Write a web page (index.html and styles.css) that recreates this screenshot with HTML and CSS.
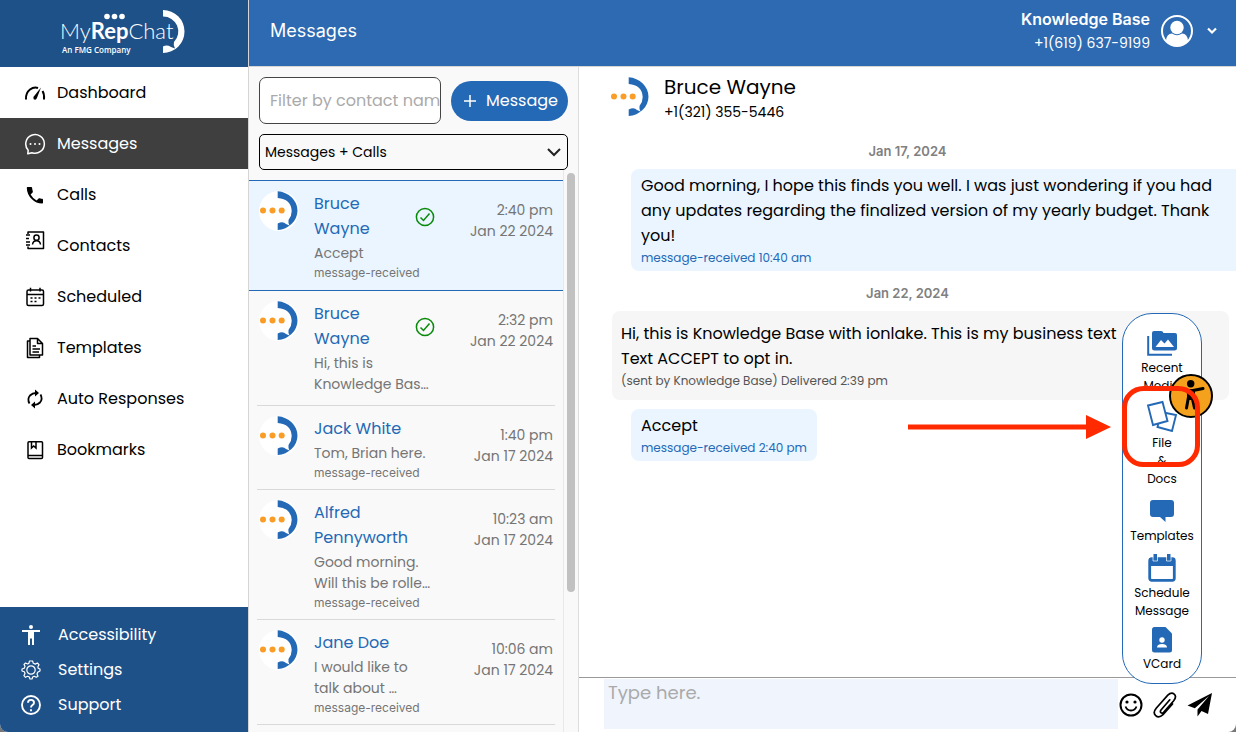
FILE: index.html
```html
<!DOCTYPE html>
<html lang="en">
<head>
    <meta charset="UTF-8">
    <meta name="viewport" content="width=device-width, initial-scale=1.0">
    <title>MyRepChat - Messages</title>
    <link rel="stylesheet" href="styles.css">
</head>
<body>
    <!-- Shared icons -->
    <svg class="sprite" width="0" height="0" aria-hidden="true">
        <symbol id="avatar" viewBox="0 0 40 40">
            <circle cx="20" cy="20" r="20" fill="#fff"/>
            <path d="M18.700 .3A21.300 19.400 0 0 1 18.700 39V32.500Q24 30 27 33L30.500 34.500Q29 32 29.500 29Q32.700 25 32.700 20Q32 8 18.700 7Z" fill="#2469b6"/>
            <circle cx="4" cy="19.500" r="3" fill="#f99d26"/>
            <circle cx="13.500" cy="19.500" r="3" fill="#f99d26"/>
            <circle cx="22.700" cy="19.500" r="3" fill="#f99d26"/>
        </symbol>
        <symbol id="check" viewBox="0 0 20 20">
            <circle cx="10" cy="10" r="8.600" fill="none" stroke="#0a8a0a" stroke-width="1.500"/>
            <path d="M5.500 10.500 8.500 13.500 14.500 6.500" fill="none" stroke="#0a8a0a" stroke-width="1.500"/>
        </symbol>
    </svg>

    <div class="app">
        <aside class="sidebar">
            <a href="#" class="logo" aria-label="MyRepChat">
                <svg width="128" height="48" viewBox="0 0 128 48">
                    <g fill="#fff">
                        <circle cx="47" cy="8.500" r="2.800"/>
                        <circle cx="54.500" cy="8.500" r="2.800"/>
                        <circle cx="62" cy="8.500" r="2.800"/>
                        <text class="logo-name" x="0" y="31"><tspan class="light">My</tspan><tspan class="bold">Rep</tspan><tspan class="light">Chat</tspan></text>
                        <text class="logo-sub" x="2" y="45">An FMG Company</text>
                        <path d="M103 2A21.500 21.500 0 0 1 103 45V38.500Q107 36.500 111 39L115 40.500Q113 37 114 34A15 15 0 0 0 103 8.500Z"/>
                    </g>
                </svg>
            </a>

            <nav class="menu">
                <a href="#">
                    <svg viewBox="0 0 22 22" fill="none" stroke="currentColor" stroke-width="2"><path d="M2 17.500Q1.500 11 6 7.500Q10 4.500 14 6M18.500 9Q20.500 12 20 17.500"/><path d="M17 5.500 12.800 16.200Q11.500 18.500 9.800 17.300Q8.700 16 10 14.300Z" fill="currentColor" stroke="none"/></svg>
                    Dashboard
                </a>
                <a href="#" class="active">
                    <svg viewBox="0 0 22 22" fill="none" stroke="currentColor" stroke-width="1.500"><path d="M4.200 17.200A9.300 9.300 0 1 1 8 19.700L3.800 20.800Z" stroke-linejoin="round"/><g fill="currentColor" stroke="none"><circle cx="6.500" cy="11" r="1"/><circle cx="11" cy="11" r="1"/><circle cx="15.500" cy="11" r="1"/></g></svg>
                    Messages
                </a>
                <a href="#">
                    <svg viewBox="0 0 22 22" fill="currentColor"><path d="M3.500 3H7.200Q8 3 8.100 3.800Q8.200 5.700 8.800 7.300Q9 8 8.600 8.400L6.600 10.400Q9 14.500 12.600 16.400L14.600 14.400Q15 14 15.700 14.200Q17.300 14.800 18.200 14.800Q19 15 19 15.800V18.700Q19 19.500 18.200 19.500Q12 19.500 7.700 15Q3 10.500 2.800 4Q2.800 3 3.500 3Z"/></svg>
                    Calls
                </a>
                <a href="#">
                    <svg class="raised" viewBox="0 0 22 22" fill="none" stroke="currentColor" stroke-width="1.500"><path d="M4 5V3H19.500V19.500H4V17.500M2 6H6M2 9.500H5M2 13H6M2 16H6" stroke-linejoin="round"/><circle cx="12.500" cy="8.700" r="2.600"/><path d="M8.500 15.500Q9 11.800 12.500 11.800T16.500 15.500"/></svg>
                    Contacts
                </a>
                <a href="#">
                    <svg viewBox="0 0 22 22" fill="none" stroke="currentColor" stroke-width="1.500"><rect x="3" y="4" width="16.500" height="15.500" rx="1.500"/><path d="M3 8.500H19.500M6.500 1.800V5.500M16 1.800V5.500"/><path d="M6.500 12H17M6.500 15.500H13" stroke-dasharray="2 2"/></svg>
                    Scheduled
                </a>
                <a href="#">
                    <svg viewBox="0 0 22 22" fill="none" stroke="currentColor" stroke-width="1.500" stroke-linejoin="round"><path d="M6 1.500H13.500L18.500 6.500V18H6ZM13.500 1.500V6.500H18.500M6 4H3.500V20.500H15.500V18"/><path d="M8.500 9H12M8.500 12H16M8.500 15H15"/></svg>
                    Templates
                </a>
                <a href="#">
                    <svg viewBox="0 0 22 22" fill="none" stroke="currentColor" stroke-width="1.800"><path d="M5.500 15.500Q3 11 6 7.500Q8.500 5 12 5M16.500 6.500Q19 11 16 14.500Q13.500 17 10 17"/><path d="M11 1.500 15 5 11 8.500ZM11 13.500 7 17 11 20.500Z" fill="currentColor" stroke="none"/></svg>
                    Auto Responses
                </a>
                <a href="#">
                    <svg viewBox="0 0 22 22" fill="none" stroke="currentColor" stroke-width="1.500"><rect x="4" y="2.700" width="14.500" height="16.800" rx="1"/><path d="M4 16.500H18.500M7.500 3V9L9.700 7L12 9V3"/></svg>
                    Bookmarks
                </a>
            </nav>

            <nav class="side-footer">
                <a href="#">
                    <svg viewBox="0 0 22 22" fill="currentColor"><circle cx="11" cy="3" r="2"/><path d="M2 6H20V8H14V21H12V14.500H10V21H8V8H2Z"/></svg>
                    Accessibility
                </a>
                <a href="#">
                    <svg viewBox="0 0 22 22" fill="none" stroke="currentColor" stroke-width="1.200" stroke-linejoin="round"><circle cx="11" cy="11" r="4.200"/><path d="M9.400 2H12.600L13.300 4.300L15.300 5.100L17.400 4L19 5.600L17.900 7.700L18.200 9.300L20 10V12L17.700 13.200L17 15L18 17.200L16.200 18.300L14.200 17.300L12.700 18L12 20H10L9.300 18L7.700 17.300L5.500 18.300L3.900 16.700L5 14.500L4.300 12.700L2 12V10L4.200 9.200L5 7.300L4 5.400L5.500 4L7.700 5L9 4.200Z"/></svg>
                    Settings
                </a>
                <a href="#">
                    <svg viewBox="0 0 22 22" fill="none" stroke="currentColor" stroke-width="1.900"><circle cx="11" cy="11" r="9"/><path d="M8 8.800Q8 5.900 11 5.900T14 8.700Q14 10 12.500 11.100T11 13.600M11 15.200V17.200"/></svg>
                    Support
                </a>
            </nav>
        </aside>

        <main class="main">
            <header class="topbar">
                <h1>Messages</h1>
                <div class="account">
                    <div class="account-text">
                        <strong>Knowledge Base</strong>
                        <span>+1(619) 637-9199</span>
                    </div>
                    <button type="button" aria-label="Account menu">
                        <svg width="32" height="32" viewBox="0 0 32 32"><circle cx="16" cy="16" r="15" fill="none" stroke="#fff" stroke-width="2"/><circle cx="16" cy="12.500" r="6.700" fill="#fff"/><path d="M5 26Q5.500 18.500 11 18.500Q16 22 21 18.500Q26.500 18.500 27 26Q22 31 16 31T5 26Z" fill="#fff"/></svg>
                        <svg width="10" height="8" viewBox="0 0 10 8"><path d="M1 1.500 5 5.500 9 1.500" fill="none" stroke="#fff" stroke-width="2.200"/></svg>
                    </button>
                </div>
            </header>

            <div class="content">
                <section class="threads">
                    <div class="filters">
                        <div class="search-row">
                            <input type="text" aria-label="Filter by contact name" placeholder="Filter by contact name">
                            <button type="button" class="new-message">
                                <svg width="14" height="14" viewBox="0 0 14 14"><path d="M7 1V13M1 7H13" stroke="#fff" stroke-width="1.500"/></svg>
                                Message
                            </button>
                        </div>
                        <select aria-label="Show">
                            <option>Messages + Calls</option>
                            <option>Messages</option>
                            <option>Calls</option>
                        </select>
                    </div>

                    <div class="thread-scroll">
                        <ul class="thread-list">
                            <li class="selected">
                                <svg class="avatar"><use href="#avatar"/></svg>
                                <div class="thread-text">
                                    <h2>Bruce<br>Wayne</h2>
                                    <p>Accept</p>
                                    <small>message-received</small>
                                </div>
                                <svg class="check"><use href="#check"/></svg>
                                <time>2:40 pm<br>Jan 22 2024</time>
                            </li>
                            <li class="no-status">
                                <svg class="avatar"><use href="#avatar"/></svg>
                                <div class="thread-text">
                                    <h2>Bruce<br>Wayne</h2>
                                    <p>Hi, this is<br>Knowledge Bas…</p>
                                </div>
                                <svg class="check"><use href="#check"/></svg>
                                <time>2:32 pm<br>Jan 22 2024</time>
                            </li>
                            <li>
                                <svg class="avatar"><use href="#avatar"/></svg>
                                <div class="thread-text">
                                    <h2>Jack White</h2>
                                    <p>Tom, Brian here.</p>
                                    <small>message-received</small>
                                </div>
                                <time>1:40 pm<br>Jan 17 2024</time>
                            </li>
                            <li>
                                <svg class="avatar"><use href="#avatar"/></svg>
                                <div class="thread-text">
                                    <h2>Alfred<br>Pennyworth</h2>
                                    <p>Good morning.<br>Will this be rolle…</p>
                                    <small>message-received</small>
                                </div>
                                <time>10:23 am<br>Jan 17 2024</time>
                            </li>
                            <li>
                                <svg class="avatar"><use href="#avatar"/></svg>
                                <div class="thread-text">
                                    <h2>Jane Doe</h2>
                                    <p>I would like to<br>talk about …</p>
                                    <small>message-received</small>
                                </div>
                                <time>10:06 am<br>Jan 17 2024</time>
                            </li>
                        </ul>
                        <div class="scrollbar"><div class="thumb"></div></div>
                    </div>
                </section>

                <section class="chat">
                    <header class="contact">
                        <svg class="avatar"><use href="#avatar"/></svg>
                        <div>
                            <h2>Bruce Wayne</h2>
                            <p>+1(321) 355-5446</p>
                        </div>
                    </header>

                    <div class="conversation">
                        <p class="day">Jan 17, 2024</p>
                        <div class="bubble received wide">
                            <p>Good morning, I hope this finds you well. I was just wondering if you had<br>any updates regarding the finalized version of my yearly budget. Thank<br>you!</p>
                            <small>message-received 10:40 am</small>
                        </div>
                        <p class="day">Jan 22, 2024</p>
                        <div class="bubble sent">
                            <p>Hi, this is Knowledge Base with ionlake. This is my business text<br>Text ACCEPT to opt in.</p>
                            <small>(sent by Knowledge Base) Delivered 2:39 pm</small>
                        </div>
                        <div class="bubble received">
                            <p>Accept</p>
                            <small>message-received 2:40 pm</small>
                        </div>
                    </div>

                    <form class="composer">
                        <textarea aria-label="Message" placeholder="Type here."></textarea>
                        <button type="button" aria-label="Emoji">
                            <svg width="24" height="24" viewBox="0 0 24 24" fill="none" stroke="#000" stroke-width="2"><circle cx="12" cy="12" r="10.500"/><path d="M6.500 13.500Q8 17.500 12 17.500T17.500 13.500" stroke-width="1.800"/><circle cx="8" cy="9" r="1.600" fill="#000" stroke="none"/><circle cx="16" cy="9" r="1.600" fill="#000" stroke="none"/></svg>
                        </button>
                        <button type="button" aria-label="Attach">
                            <svg width="24" height="26" viewBox="0 0 24 26" fill="none" stroke="#000" stroke-width="1.700" stroke-linecap="round"><path d="M16.800 7.800 8 18Q6.800 19.600 7.900 20.600T10.600 20.300L20.700 8.800Q24 4.600 21.200 2.200T14.800 3.200L3.200 16.200Q-.5 20.700 2.700 23.600T10 22.700L19.500 12"/></svg>
                        </button>
                        <button type="submit" aria-label="Send">
                            <svg width="26" height="26" viewBox="0 0 26 26"><path d="M25 1 21 22 14.500 19 10.500 24.500V17.500L22 4 7.800 16.200.5 13.500Z"/></svg>
                        </button>
                    </form>

                    <!-- Attachment menu -->
                    <div class="attach-menu">
                        <button type="button">
                            <svg width="30" height="28" viewBox="0 0 30 28"><path d="M1.200 7V25.800H25" fill="none" stroke="#2469b6" stroke-width="2"/><path d="M7 2H14Q16 2 16.500 4H28Q30 4 30 6V19Q30 21.500 27.500 21.500H7.500Q5 21.500 5 19V4Q5 2 7 2Z" fill="#2469b6"/><path d="M8.500 18 14 11 17.500 14.500 21 10.500 27 18Z" fill="#fff"/></svg>
                            Recent<br>Media
                        </button>
                        <button type="button" class="files">
                            <svg width="32" height="32" viewBox="0 0 32 32" fill="#fff" stroke="#2469b6" stroke-width="1.900"><path d="M15 12 30 15 26 31 11.500 27Z"/><path d="M2 5.500 16.500 2 21.500 21 7 25Z"/></svg>
                            File<br>&amp;<br>Docs
                        </button>
                        <button type="button" class="templates">
                            <svg width="24" height="22" viewBox="0 0 24 22"><path d="M3 0H21Q24 0 24 3V14Q24 17 21 17H15.500V22L10 17H3Q0 17 0 14V3Q0 0 3 0Z" fill="#2469b6"/></svg>
                            Templates
                        </button>
                        <button type="button" class="schedule">
                            <svg width="28" height="28" viewBox="0 0 28 28"><rect x="1.700" y="4.700" width="24.600" height="21.600" rx="2" fill="#fff" stroke="#2469b6" stroke-width="2.800"/><path d="M1 4H27V12H1ZM5.500 0H9V7H5.500ZM19 0H22.500V7H19Z" fill="#2469b6"/><path d="M5 3V7H9.500V3M18.500 3V7H23V3" fill="none" stroke="#fff" stroke-width=".7"/></svg>
                            Schedule<br>Message
                        </button>
                        <button type="button" class="vcard">
                            <svg width="20" height="26" viewBox="0 0 20 26"><path d="M2.500 0H13.500L20 6.500V23Q20 25.500 17.500 25.500H2.500Q0 25.500 0 23V2.500Q0 0 2.500 0Z" fill="#2469b6"/><circle cx="10" cy="13" r="2.700" fill="#fff"/><path d="M5 20.500Q5 17 10 17T15 20.500Z" fill="#fff"/></svg>
                            VCard
                        </button>
                    </div>

                    <button type="button" class="a11y" aria-label="Accessibility options">
                        <svg width="44" height="44" viewBox="0 0 44 44"><circle cx="22" cy="22" r="21" fill="#f4a11d" stroke="#000" stroke-width="2"/><circle cx="21.700" cy="9.800" r="3.700"/><path d="M10 14.500 19 16.500M34 14.500 24 16.500M19.500 23 17.500 34M23 23 25.500 34" fill="none" stroke="#000" stroke-width="3" stroke-linecap="round"/><path d="M17.500 15H26V19L25 26H18.500Z"/></svg>
                    </button>

                    <!-- Callout pointing at File & Docs -->
                    <svg class="callout" width="292" height="82" viewBox="0 0 292 82" aria-hidden="true">
                        <path d="M0 41H180" stroke="#ff2a00" stroke-width="5"/>
                        <path d="M178 29 203 41 178 53Z" fill="#ff2a00"/>
                        <rect x="216.500" y="2.500" width="73" height="76" rx="19" fill="none" stroke="#ff2a00" stroke-width="5"/>
                    </svg>
                </section>
            </div>
        </main>
    </div>
</body>
</html>
```
FILE: styles.css
```css
* {
    box-sizing: border-box;
}
body {
    margin: 0;
    font-family: Poppins, Inter, sans-serif;
    font-size: 16px;
    color: #000;
    background-color: #777;
}
h1, h2, p, ul {
    margin: 0;
    padding: 0;
    font-weight: normal;
}
button, input, select, textarea {
    font-family: inherit;
}
button {
    padding: 0;
    border: none;
    background: none;
    cursor: pointer;
}
a {
    color: inherit;
    text-decoration: none;
}
.sprite {
    position: absolute;
}
.app {
    display: flex;
    height: 100vh;
    overflow: hidden;
    border-radius: 0 0 8px 8px;
    background-color: #fff;
}

/* Sidebar */
.sidebar {
    display: flex;
    flex-direction: column;
    width: 248px;
    flex-shrink: 0;
}
.logo {
    display: flex;
    justify-content: center;
    height: 67px;
    padding-top: 8px;
    background-color: #1f5189;
}
.logo-name {
    font-family: Lato, sans-serif;
    font-size: 22px;
}
.logo-name .light {
    font-weight: 300;
}
.logo-name .bold {
    font-weight: 700;
}
.logo-sub {
    font-family: "Open Sans", sans-serif;
    font-size: 8px;
    font-weight: 600;
}
.menu {
    flex: 1;
}
.menu a {
    display: flex;
    align-items: center;
    gap: 11px;
    height: 51px;
    padding-left: 24px;
}
.menu svg,
.side-footer svg {
    width: 22px;
    height: 22px;
}
.menu .raised {
    margin-bottom: 12px;
}
.menu .active {
    color: #fff;
    background-color: #3f3f3f;
}
.side-footer {
    padding: 10px 20px;
    color: #fff;
    background-color: #1f5189;
}
.side-footer a {
    display: flex;
    align-items: center;
    gap: 16px;
    height: 35px;
}

/* Top bar */
.main {
    display: flex;
    flex-direction: column;
    flex: 1;
    min-width: 0;
    border-left: 1px solid #d5d5d5;
}
.topbar {
    display: flex;
    justify-content: space-between;
    align-items: center;
    height: 67px;
    padding: 0 19px 4px 21px;
    border-bottom: 1px solid #d5d5d5;
    color: #fff;
    background-color: #2d6ab1;
}
.topbar h1 {
    font-family: Inter, sans-serif;
    font-size: 18px;
    line-height: 24px;
}
.account {
    display: flex;
    align-items: center;
    gap: 11px;
}
.account-text {
    display: flex;
    flex-direction: column;
    text-align: right;
    line-height: 24px;
}
.account-text strong {
    font-family: Inter, sans-serif;
    font-size: 16px;
    font-weight: 600;
}
.account-text span {
    font-size: 14px;
}
.account button {
    display: flex;
    align-items: center;
    gap: 14px;
}
.content {
    display: flex;
    flex: 1;
    min-height: 0;
}

/* Conversation list */
.threads {
    display: flex;
    flex-direction: column;
    width: 330px;
    flex-shrink: 0;
    border-right: 1px solid #ddd;
    background-color: #f9f9f9;
}
.filters {
    padding: 10px 10px 0;
}
.search-row {
    display: flex;
    align-items: center;
    gap: 10px;
    margin-bottom: 10px;
}
.search-row input {
    flex: 1;
    min-width: 0;
    height: 47px;
    padding: 0 0 0 10px;
    border: 1px solid #444;
    border-radius: 7px;
    font-size: 16px;
    background-color: #fff;
}
.search-row input::placeholder,
.composer textarea::placeholder {
    color: #aaa;
}
.new-message {
    display: flex;
    align-items: center;
    justify-content: center;
    gap: 9px;
    width: 117px;
    height: 40px;
    padding-left: 2px;
    border-radius: 20px;
    font-size: 16px;
    color: #fff;
    background-color: #2469b6;
}
.filters select {
    appearance: none;
    width: 100%;
    height: 36px;
    padding: 0 5px;
    border: 1px solid #000;
    border-radius: 5px;
    font-size: 14px;
    color: #000;
    background: url("data:image/svg+xml,%3Csvg xmlns='http://www.w3.org/2000/svg' viewBox='0 0 14 9'%3E%3Cpath d='M1 1l6 6 6-6' fill='none' stroke='%23222' stroke-width='2'/%3E%3C/svg%3E") no-repeat right 6px center / 14px 9px;
}
.thread-scroll {
    display: flex;
    flex: 1;
    min-height: 0;
}
.thread-list {
    flex: 1;
    padding-top: 10px;
    list-style: none;
    overflow: hidden;
}
.thread-list li {
    display: flex;
    margin: 0 8px;
    padding: 10px 2px 7px;
    border-bottom: 1px solid #d9d9d9;
}
.thread-list li.selected {
    margin: 0;
    padding: 10px 10px 8px;
    border-top: 1px solid #2469b6;
    border-bottom-color: #2469b6;
    background-color: #eaf5ff;
}
.thread-list li.no-status {
    padding-bottom: 10px;
}
.avatar {
    width: 40px;
    height: 40px;
    flex-shrink: 0;
}
.thread-text {
    flex: 1;
    min-width: 0;
    padding-left: 15px;
    white-space: nowrap;
}
.thread-text h2 {
    font-size: 16px;
    line-height: 25px;
    color: #2469b6;
}
.thread-text p {
    margin-top: 2px;
    font-size: 14px;
    line-height: 21px;
    color: #757575;
}
.thread-text small {
    display: block;
    font-family: Inter, sans-serif;
    font-size: 12px;
    line-height: 18px;
    color: #757575;
}
.check {
    width: 20px;
    height: 20px;
    margin: 16px 35px 0 0;
    flex-shrink: 0;
}
.thread-list time {
    padding-top: 9px;
    font-size: 14px;
    line-height: 21px;
    text-align: right;
    white-space: nowrap;
    color: #757575;
}
.scrollbar {
    width: 15px;
    padding: 3px 3px 0;
    border-left: 1px solid #e8e8e8;
}
.scrollbar .thumb {
    width: 8px;
    height: 75%;
    border-radius: 4px;
    background-color: #c1c1c1;
}

/* Chat */
.chat {
    position: relative;
    display: flex;
    flex-direction: column;
    flex: 1;
    min-width: 0;
    overflow: hidden;
}
.contact {
    display: flex;
    gap: 14px;
    padding: 8px 31px 0;
}
.contact .avatar {
    margin-top: 2px;
}
.contact h2 {
    font-size: 20px;
    line-height: 25px;
}
.contact p {
    font-size: 14px;
    line-height: 24px;
}
.conversation {
    flex: 1;
    padding-top: 17px;
}
.day {
    height: 20px;
    margin-bottom: 8px;
    font-family: Inter, sans-serif;
    font-size: 13px;
    font-weight: 600;
    line-height: 20px;
    text-align: center;
    color: #808080;
}
.bubble {
    margin-bottom: 9px;
    padding: 4px 10px;
    border-radius: 8px;
    white-space: nowrap;
}
.bubble p {
    line-height: 25px;
}
.bubble small {
    display: block;
    font-size: 12px;
    line-height: 19px;
}
.received {
    width: fit-content;
    margin-left: 52px;
    background-color: #eaf5ff;
}
.received small {
    color: #2469b6;
}
.wide {
    width: auto;
    margin-right: -10px;
    margin-bottom: 12px;
}
.sent {
    margin-left: 33px;
    margin-right: 7px;
    padding: 10px 9px;
    background-color: #f6f6f6;
}
.sent small {
    color: #555;
}
.composer {
    display: flex;
    align-items: center;
    gap: 10px;
    height: 55px;
    padding: 0 23px 3px 25px;
    border-top: 1px solid #999;
}
.composer textarea {
    flex: 1;
    height: 50px;
    padding: 0 4px;
    margin-right: -9px;
    border: none;
    resize: none;
    font-size: 18px;
    background-color: #eff4fd;
}
.composer button {
    display: flex;
    margin-top: 3px;
}

/* Floating items */
.attach-menu {
    position: absolute;
    right: 34px;
    bottom: 48px;
    display: flex;
    flex-direction: column;
    width: 80px;
    padding: 15px 0 10px;
    border: 1px solid #2469b6;
    border-radius: 30px;
    background-color: #fff;
}
.attach-menu button {
    font-size: 12px;
    line-height: 18px;
    text-align: center;
    color: #000;
}
.attach-menu svg {
    display: block;
    margin: 0 auto 2px;
}
.attach-menu .files {
    padding-top: 5px;
}
.attach-menu .templates {
    padding-top: 12px;
}
.attach-menu .templates svg {
    margin-bottom: 5px;
}
.attach-menu .schedule {
    padding-top: 9px;
}
.attach-menu .vcard {
    padding-top: 7px;
}
.a11y {
    position: absolute;
    right: 23px;
    bottom: 314px;
    display: flex;
}
.callout {
    position: absolute;
    right: 36px;
    bottom: 264px;
    pointer-events: none;
}
```
